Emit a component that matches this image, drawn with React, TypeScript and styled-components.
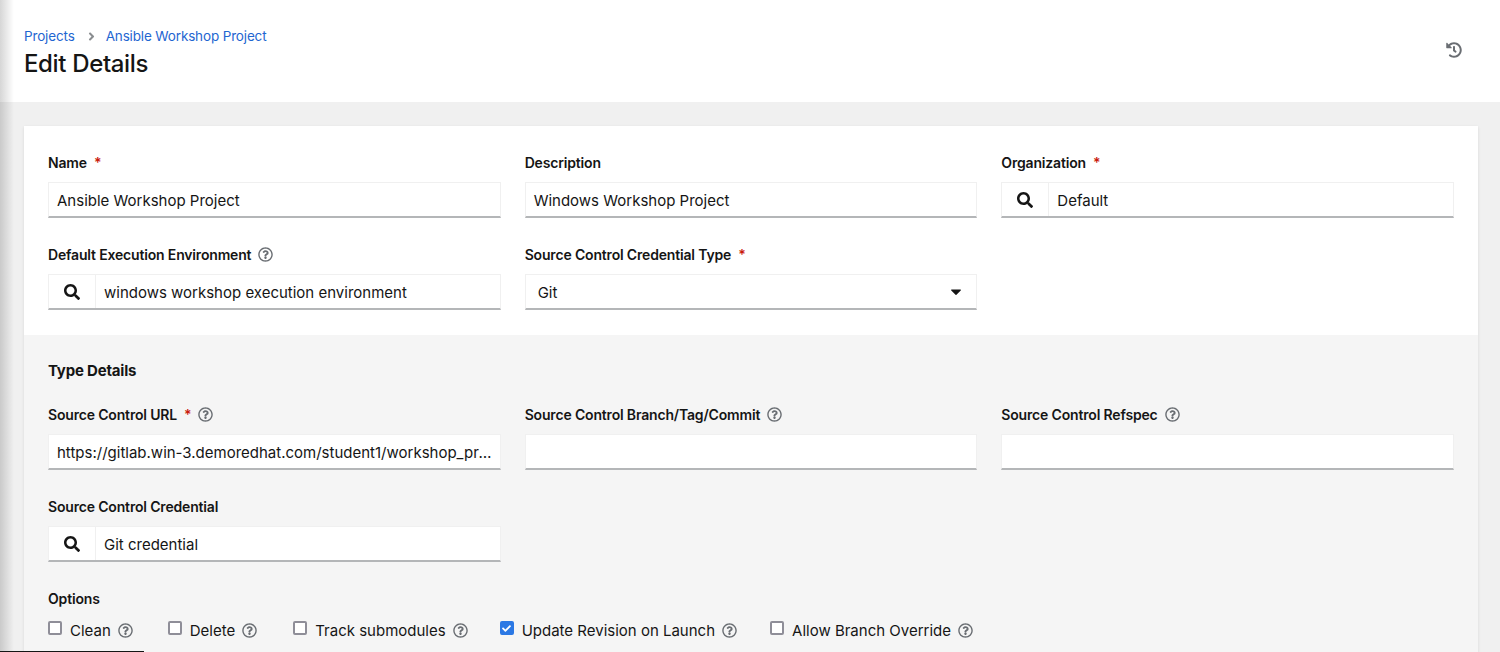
import styled, { createGlobalStyle } from "styled-components";
import { FaAngleRight, FaCaretDown, FaCheck, FaHistory, FaRegQuestionCircle, FaSearch } from "react-icons/fa";

const GlobalStyle = createGlobalStyle`
  html, body {
    margin: 0;
    height: 652px;
    overflow: hidden;
    background: #f0f0f0;
    font-family: Inter, "Noto Sans", sans-serif;
    color: #151515;
  }
`;

const Help = () => (
  <HelpIcon>
    <FaRegQuestionCircle />
  </HelpIcon>
);

const Label = ({ text, required, hint }: { text: string; required?: boolean; hint?: boolean }) => (
  <FieldLabel>
    <span>{text}</span>
    {required && <Star>*</Star>}
    {hint && <Help />}
  </FieldLabel>
);

const Lookup = ({ value }: { value: string }) => (
  <InputBox>
    <SearchButton>
      <FaSearch />
    </SearchButton>
    <InputValue>{value}</InputValue>
  </InputBox>
);

const Check = ({ text, checked, gap }: { text: string; checked?: boolean; gap: number }) => (
  <OptionItem $gap={gap}>
    <OptionBox $checked={checked}>{checked && <FaCheck />}</OptionBox>
    <OptionText>{text}</OptionText>
    <Help />
  </OptionItem>
);

export default function App() {
  return (
    <>
      <GlobalStyle />
      <Page>
        <Header>
          <div>
            <Crumbs>
              <a>Projects</a>
              <FaAngleRight />
              <a>Ansible Workshop Project</a>
            </Crumbs>
            <Title>Edit Details</Title>
          </div>
          <History>
            <FaHistory />
          </History>
        </Header>
        <Body>
          <Card>
            <TopForm>
              <FormGrid>
                <Field>
                  <Label text="Name" required />
                  <InputBox>
                    <InputValue>Ansible Workshop Project</InputValue>
                  </InputBox>
                </Field>
                <Field>
                  <Label text="Description" />
                  <InputBox>
                    <InputValue>Windows Workshop Project</InputValue>
                  </InputBox>
                </Field>
                <Field>
                  <Label text="Organization" required />
                  <Lookup value="Default" />
                </Field>
                <Field>
                  <Label text="Default Execution Environment" hint />
                  <Lookup value="windows workshop execution environment" />
                </Field>
                <Field>
                  <Label text="Source Control Credential Type" required />
                  <SelectBox>
                    <InputValue>Git</InputValue>
                    <FaCaretDown />
                  </SelectBox>
                </Field>
              </FormGrid>
            </TopForm>
            <Details>
              <Heading>Type Details</Heading>
              <FormGrid>
                <Field>
                  <Label text="Source Control URL" required hint />
                  <InputBox>
                    <InputValue>https://gitlab.win-3.demoredhat.com/student1/workshop_project.git</InputValue>
                  </InputBox>
                </Field>
                <Field>
                  <Label text="Source Control Branch/Tag/Commit" hint />
                  <InputBox />
                </Field>
                <Field>
                  <Label text="Source Control Refspec" hint />
                  <InputBox />
                </Field>
                <Field>
                  <Label text="Source Control Credential" />
                  <Lookup value="Git credential" />
                </Field>
              </FormGrid>
              <Options>
                <FieldLabel>
                  <span>Options</span>
                </FieldLabel>
                <OptionRow>
                  <Check text="Clean" gap={35} />
                  <Check text="Delete" gap={36} />
                  <Check text="Track submodules" gap={32} />
                  <Check text="Update Revision on Launch" checked gap={33} />
                  <Check text="Allow Branch Override" gap={0} />
                </OptionRow>
              </Options>
            </Details>
          </Card>
        </Body>
        <SideShade />
        <ScrollLine />
      </Page>
    </>
  );
}

const Page = styled.div`
  position: relative;
  height: 652px;
  overflow: hidden;
`;

const Body = styled.main`
  padding: 24px 22px 0 24px;
`;

const Card = styled.section`
  background: #fff;
  box-shadow: 0 1px 3px rgba(3, 3, 3, 0.1);
`;

const SideShade = styled.div`
  position: absolute;
  left: 0;
  top: 0;
  bottom: 0;
  width: 14px;
  background: linear-gradient(to right, rgba(0, 0, 0, 0.16), rgba(0, 0, 0, 0));
  pointer-events: none;
`;

const ScrollLine = styled.div`
  position: absolute;
  left: 0;
  bottom: 0;
  width: 144px;
  height: 1px;
  background: #151515;
`;

const Header = styled.header`
  display: flex;
  justify-content: space-between;
  height: 102px;
  box-sizing: border-box;
  padding: 26px 38px 0 24px;
  background: #fff;
`;

const Crumbs = styled.nav`
  display: flex;
  align-items: center;
  height: 20px;
  font-size: 13.5px;
  letter-spacing: -0.15px;
  color: #1f66d1;

  svg {
    width: 13px;
    height: 13px;
    margin: 0 8px 0 10px;
    color: #8a8d90;
  }
`;

const Title = styled.h1`
  margin: 3px 0 0;
  font-size: 24px;
  line-height: 30px;
  font-weight: 500;
  letter-spacing: -0.35px;
  color: #151515;
`;

const History = styled.div`
  margin-top: 16px;
  color: #6a6e73;

  svg {
    display: block;
    width: 16px;
    height: 16px;
  }
`;

const TopForm = styled.div`
  padding: 27px 24px 25px;
  background: #fff;
`;

const Details = styled.div`
  padding: 26px 24px 0;
  background: #f5f5f5;
  height: 330px;
`;

const Heading = styled.h2`
  margin: 0 0 24px;
  font-size: 15px;
  line-height: 20px;
  font-weight: 700;
  letter-spacing: -0.2px;
`;

const FormGrid = styled.div`
  display: grid;
  grid-template-columns: repeat(3, 1fr);
  column-gap: 24px;
  row-gap: 27px;
`;

const Field = styled.div`
  min-width: 0;
`;

const FieldLabel = styled.div`
  display: flex;
  align-items: center;
  height: 19px;
  margin-bottom: 10px;
  font-size: 14px;
  font-weight: 600;
  letter-spacing: -0.17px;
  color: #151515;
`;

const Star = styled.span`
  margin-left: 7px;
  color: #c9190b;
  font-weight: 600;
`;

const InputBox = styled.div`
  display: flex;
  align-items: center;
  height: 36px;
  box-sizing: border-box;
  background: #fff;
  border: 1px solid #f0f0f0;
  border-bottom: 2px solid #b4b6b8;
`;

const SelectBox = styled(InputBox)`
  justify-content: space-between;
  padding: 0 14px 0 4px;

  svg {
    width: 12px;
    height: 17px;
    color: #151515;
  }
`;

const SearchButton = styled.div`
  flex: none;
  display: flex;
  align-items: center;
  justify-content: center;
  width: 47px;
  height: 100%;
  border-right: 1px solid #f0f0f0;
  box-sizing: border-box;

  svg {
    width: 16px;
    height: 16px;
    color: #151515;
  }
`;

const InputValue = styled.div`
  flex: 1;
  min-width: 0;
  padding: 2px 8px 0;
  font-size: 15px;
  white-space: nowrap;
  overflow: hidden;
  text-overflow: ellipsis;
  color: #151515;
`;

const HelpIcon = styled.span`
  display: inline-flex;
  margin-left: 7px;
  color: #6a6e73;

  svg {
    width: 15px;
    height: 15px;
  }
`;

const Options = styled.div`
  margin-top: 27px;
`;

const OptionRow = styled.div`
  display: flex;
  align-items: flex-start;
`;

const OptionItem = styled.div<{ $gap: number }>`
  display: flex;
  align-items: center;
  height: 24px;
  margin-right: ${(p) => p.$gap}px;
`;

const OptionBox = styled.div<{ $checked?: boolean }>`
  flex: none;
  display: flex;
  align-items: center;
  justify-content: center;
  width: 14px;
  height: 14px;
  margin: -4px 8px 0 0;
  box-sizing: border-box;
  border-radius: 2px;
  background: ${(p) => (p.$checked ? "#2b78e4" : "#fff")};
  border: 2px solid ${(p) => (p.$checked ? "#2b78e4" : "#8f8e98")};
  color: #fff;

  svg {
    width: 9px;
    height: 9px;
  }
`;

const OptionText = styled.span`
  font-size: 15px;
  color: #151515;
`;
